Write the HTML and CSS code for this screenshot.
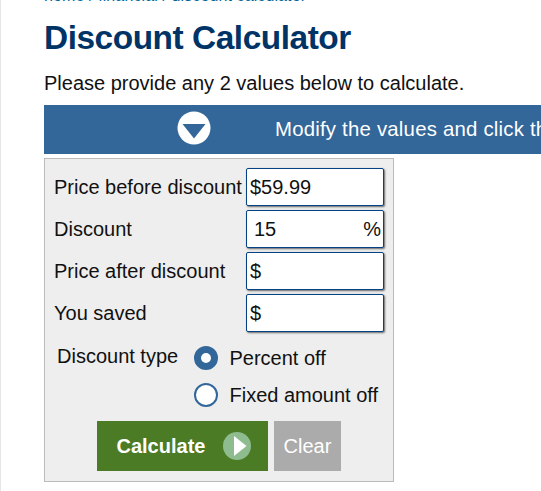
FILE: index.html
```html
<!DOCTYPE html>
<html lang="en">
<head>
<meta charset="utf-8">
<title>Discount Calculator</title>
<link rel="stylesheet" href="styles.css">
</head>
<body>
<main class="page">
  <nav class="crumbs"><a>home</a> / <a>financial</a> / <a>discount calculator</a></nav>
  <h1 class="title">Discount Calculator</h1>
  <p class="intro">Please provide any 2 values below to calculate.</p>
  <div class="banner">
    <svg class="banner-icon" viewBox="0 0 34 34"><circle cx="17" cy="17" r="16.5" fill="#fff"/><path d="M5.5 13h23L17 27.5z" fill="#336699"/></svg>
    <span>Modify the values and click the Calculate button to use</span>
  </div>
  <form class="panel">
    <div class="row"><label>Price before discount</label><div class="field"><span>$59.99</span></div></div>
    <div class="row"><label>Discount</label><div class="field percent"><span>15</span><span>%</span></div></div>
    <div class="row"><label>Price after discount</label><div class="field"><span>$</span></div></div>
    <div class="row"><label>You saved</label><div class="field"><span>$</span></div></div>
    <div class="types">
      <span class="type-label">Discount type</span>
      <div class="options">
        <label class="option"><i class="radio checked"></i><span>Percent off</span></label>
        <label class="option"><i class="radio"></i><span>Fixed amount off</span></label>
      </div>
    </div>
    <div class="actions">
      <button type="button" class="calculate"><span>Calculate</span>
        <svg class="go" viewBox="0 0 28 28"><circle cx="14" cy="14" r="14" fill="#8fbc8f"/><path d="M11 4v20l12.5-10z" fill="#fff"/></svg>
      </button>
      <button type="button" class="clear"><span>Clear</span></button>
    </div>
  </form>
</main>
</body>
</html>
```
FILE: styles.css
```css
* { box-sizing: border-box; }
html, body { margin: 0; height: 491px; overflow: hidden; background: #fff; }
body { font: 20px/24px "Liberation Sans", Arial, sans-serif; color: #111; }
.page { height: 491px; padding-left: 43px; border-left: 1px solid #e6e6e6; overflow: hidden; white-space: nowrap; }
.crumbs { height: 18px; margin-top: -13px; font-size: 16px; line-height: 18px; letter-spacing: 0.11px; color: #069; }
.title { margin: 14px 0 0; font-size: 33.4px; line-height: 38px; letter-spacing: -0.45px; color: #003366; }
.intro { margin: 14px 0 0; line-height: 24px; }
.banner { display: flex; align-items: center; width: 700px; height: 49px; margin-top: 10px; padding-left: 133px; background: #336699; color: #fff; }
.banner-icon { flex: none; width: 34px; height: 34px; margin: -4px 64px 0 0; }
.banner span { margin-top: -1px; font-size: 20.4px; letter-spacing: 0.2px; }
.panel { width: 350px; height: 324px; margin-top: 4px; padding: 9px 9px 0; border: 1px solid #bbb; background: #eee; }
.row { display: flex; align-items: center; justify-content: space-between; height: 38px; margin-bottom: 4px; }
.field { display: flex; align-items: center; justify-content: space-between; width: 138px; height: 38px; margin-left: -4px; padding: 0 3px; border: 1px solid #044284; border-radius: 2px; background: #fff; box-shadow: 1px 1px 2px #666; }
.percent { padding: 0 2px 0 7px; }
.types { display: flex; padding-left: 3px; }
.type-label { width: 137px; padding-top: 8px; }
.option { display: flex; align-items: center; gap: 11.5px; height: 37px; }
.options { padding-top: 3px; }
.radio { width: 24px; height: 24px; border: 2px solid #336699; border-radius: 50%; background: #fff; }
.radio.checked { border-width: 7px; }
.actions { display: flex; gap: 6px; padding: 8px 0 0 43px; }
button { display: flex; align-items: center; height: 50px; margin: 0; border: 0; border-radius: 0; font: inherit; color: #fff; }
.calculate { width: 171px; padding: 0 0 0 19.5px; gap: 17.5px; background: #4c7b25; font-weight: bold; }
.go { width: 28px; height: 28px; }
.clear { justify-content: center; width: 67px; padding: 0; background: #ababab; }
```
